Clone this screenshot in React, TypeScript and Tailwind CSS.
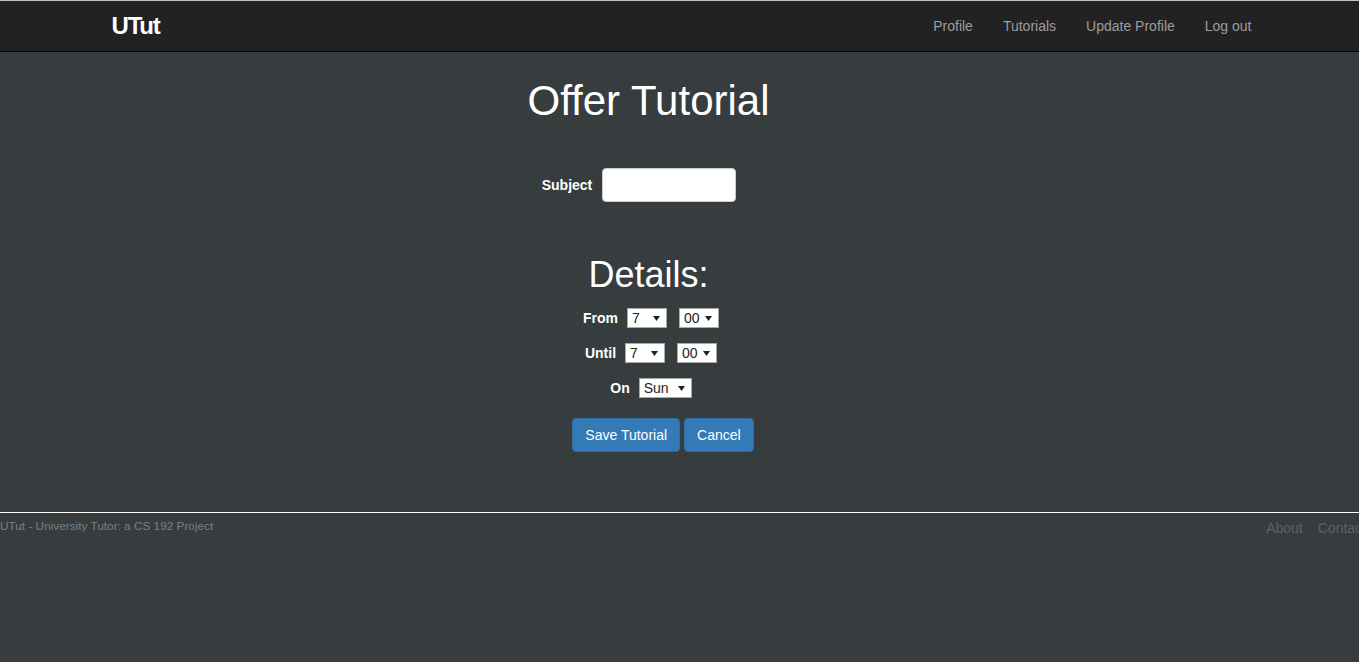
import React from "react";

const navLinks = ["Profile", "Tutorials", "Update Profile", "Log out"];

function Caret() {
  return (
    <svg width="7" height="5" viewBox="0 0 7 5" className="shrink-0">
      <path d="M0 0 H7 L3.5 5 Z" fill="#222" />
    </svg>
  );
}

function FakeSelect({ value, width }: { value: string; width: string }) {
  return (
    <div
      className={`${width} h-[20px] bg-white border border-[#a9a9a9] flex items-center justify-between pl-[4px] pr-[6px] text-[14px] leading-[18px] text-[#222]`}
    >
      <span>{value}</span>
      <Caret />
    </div>
  );
}

function TimeRow({ label, hour, minute, shift }: { label: string; hour: string; minute: string; shift: string }) {
  return (
    <div className={`flex justify-center items-center h-[20px] ${shift}`}>
      <span className="font-bold text-[14px] text-white mr-[9px]">{label}</span>
      <FakeSelect value={hour} width="w-[40px]" />
      <div className="w-[12px]" />
      <FakeSelect value={minute} width="w-[40px]" />
    </div>
  );
}

export default function App() {
  return (
    <div
      className="min-h-[662px] bg-[#373c3f] overflow-x-hidden"
      style={{ fontFamily: '"Liberation Sans", Arial, sans-serif' }}
    >
      {/* Navbar */}
      <nav className="bg-[#222] border-t border-t-[#c4c4c4] border-b border-b-[#080808]">
        <div className="max-w-[1170px] mx-auto px-[15px] flex items-center justify-between h-[50px]">
          <a className="ml-[2px] text-white font-bold text-[24px] tracking-[-1.2px] leading-[50px]">UTut</a>
          <ul className="flex mr-[-17px]">
            {navLinks.map((l) => (
              <li key={l}>
                <a className="block px-[15px] py-[15px] text-[14px] leading-[20px] text-[#9d9d9d]">{l}</a>
              </li>
            ))}
          </ul>
        </div>
      </nav>

      {/* Main */}
      <main className="pr-[62px] pt-[28px] h-[460px]">
        <h1 className="text-center text-white text-[42px] leading-[41px]">Offer Tutorial</h1>

        <div className="flex justify-center items-center mt-[47px] mr-[19px]">
          <label className="font-bold text-[14px] text-white mr-[10px]">Subject</label>
          <input className="w-[134px] h-[34px] rounded-[4px] border border-[#ccc] bg-white px-[12px] text-[14px] outline-none" />
        </div>

        <h2 className="text-center text-white text-[36px] leading-[36px] mt-[55px]">Details:</h2>

        <div className="flex flex-col gap-[15px] mt-[15px]">
          <TimeRow label="From" hour="7" minute="00" shift="ml-[5px]" />
          <TimeRow label="Until" hour="7" minute="00" shift="ml-[5px]" />
          <div className="flex justify-center items-center h-[20px] ml-[5px]">
            <span className="font-bold text-[14px] text-white mr-[9px]">On</span>
            <FakeSelect value="Sun" width="w-[53px]" />
          </div>
        </div>

        <div className="flex justify-center gap-[4px] mt-[20px] ml-[29px]">
          <button className="bg-[#337ab7] border border-[#2e6da4] rounded-[4px] px-[12px] py-[6px] text-[14px] leading-[20px] text-white">
            Save Tutorial
          </button>
          <button className="bg-[#337ab7] border border-[#2e6da4] rounded-[4px] px-[12px] py-[6px] text-[14px] leading-[20px] text-white">
            Cancel
          </button>
        </div>
      </main>

      {/* Footer */}
      <footer className="border-t border-t-white flex justify-between items-start pt-[5px]">
        <p className="text-[11.8px] leading-[17px] text-[#7b7f82]">UTut - University Tutor: a CS 192 Project</p>
        <ul className="flex gap-[15px] mr-[-7px] text-[14px] leading-[20px] text-[#5d6164] whitespace-nowrap">
          <li>About</li>
          <li>Contact</li>
        </ul>
      </footer>
    </div>
  );
}
